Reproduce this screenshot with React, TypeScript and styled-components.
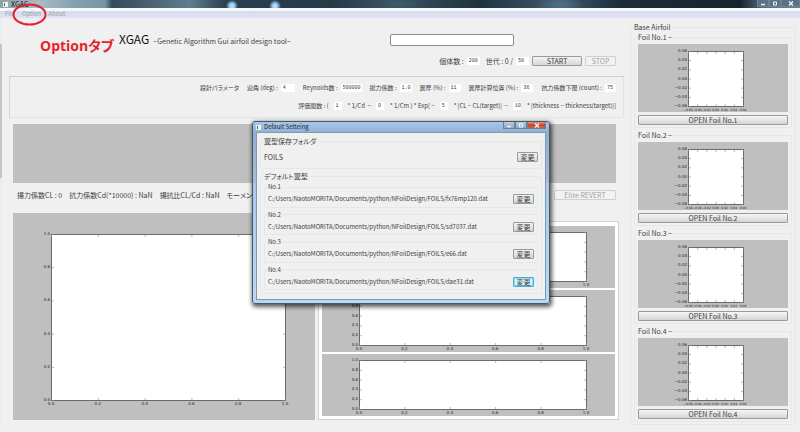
import React from "react";
import styled, { createGlobalStyle, css } from "styled-components";

const GlobalStyle = createGlobalStyle`
  * { box-sizing: border-box; }
  body {
    margin: 0;
    background: #f0f0f0;
    color: #3c3c3c;
    font-family: "Noto Sans CJK JP", "Noto Sans", sans-serif;
    font-size: 7px;
    line-height: 10px;
    font-feature-settings: "palt";
  }
  button, input { font: inherit; color: inherit; margin: 0; }
`;

/* ---------- window chrome ---------- */

const Page = styled.div`
  position: relative;
  min-height: 100vh;
  overflow: hidden;
`;

const TitleBar = styled.header`
  display: flex;
  align-items: center;
  height: 8px;
  padding-left: 3px;
  gap: 3px;
  color: #10181c;
  background:
    radial-gradient(circle at 232px 6px, #a5dcff 0 2px, transparent 6px),
    radial-gradient(circle at 275px 6px, #a5dcff 0 2px, transparent 6px),
    radial-gradient(ellipse 24px 9px at 560px 5px, #4f7088, transparent),
    radial-gradient(ellipse 26px 8px at 400px 4px, #3c5a68, transparent),
    linear-gradient(90deg, #8fa1a8 0, #a8bcc2 40px, #82a0b0 75px, #7697a8 105px, #36495a 112px, #5f7d90 190px,
      #2b4150 225px, #263a48 330px, #3a5260 390px, #20323f 480px, #405a70 560px, #1c2d38 620px, #18242c 740px, #597084 765px, #6c8194 100%);
`;

const AppIcon = styled.span`
  width: 5px;
  height: 5px;
  border: 1px solid #e9f3ef;
  background: linear-gradient(90deg, #1c7a55 50%, #f4f4f4 50%);
`;

const WindowButtons = styled.div`
  display: flex;
  align-self: flex-start;
  margin-left: auto;
`;

const WindowButton = styled.button<{ $tone?: "close" | "dark"; $wide?: boolean }>`
  display: grid;
  place-items: center;
  width: ${(p) => (p.$wide ? 19 : 12)}px;
  height: 7px;
  padding: 0;
  border: 1px solid #6d8298;
  border-top: 0;
  color: #f4f8fb;
  background: ${(p) =>
    p.$tone === "close"
      ? "linear-gradient(#e09a8c, #c8432c 50%, #d0664c)"
      : p.$tone === "dark"
        ? "#5b7187"
        : "linear-gradient(#b9cde2, #8ea9c6)"};
`;

const MenuBar = styled.nav`
  display: flex;
  align-items: flex-start;
  height: 11px;
  padding: 0 0 0 5px;
  gap: 7px;
  border-top: 3px solid #f6f8fc;
  background: linear-gradient(#d6dbed, #dfe3f2);
  border-bottom: 1px solid #ececf0;
`;

const MenuItem = styled.button`
  padding: 0;
  border: 0;
  font-size: 6px;
  line-height: 6px;
  color: #9b9da8;
  background: none;
`;

const Body = styled.div`
  display: flex;
  align-items: stretch;
  padding-right: 4px;
`;

const Backdrop = styled.div`
  flex: 0 0 2px;
  margin-right: 7px;
  background: linear-gradient(#e9ecf2 25px, #c4c5ca 25px, #c4c5ca 159px, #ececec 159px);
`;

/* ---------- main column ---------- */

const Main = styled.main`
  flex: 1;
  min-width: 0;
  margin-right: 6px;
`;

const Brand = styled.div`
  display: grid;
  grid-template-columns: 271px 124px;
  align-items: center;
  height: 18px;
  margin-top: 12px;
  padding-left: 110px;
`;

const BrandTitle = styled.h1`
  display: flex;
  align-items: baseline;
  gap: 4px;
  margin: 0;
  font-size: 12px;
  line-height: 16px;
  font-weight: 400;
  color: #111;
`;

const Tagline = styled.small`
  font-size: 7px;
  color: #444;
`;

const NameInput = styled.input`
  height: 12px;
  padding: 0 3px;
  border: 1px solid #8b8b8b;
  border-radius: 2px;
  background: #fff;
`;

const Row = styled.div<{ $height: number; $gap?: number }>`
  display: flex;
  align-items: center;
  justify-content: flex-end;
  gap: ${(p) => p.$gap ?? 8}px;
  height: ${(p) => p.$height}px;
  padding-right: 8px;
  white-space: nowrap;
`;

const Field = styled.label`
  display: flex;
  align-items: center;
  gap: 3px;
  white-space: pre;
`;

const NumberBox = styled.input<{ $w: number }>`
  width: ${(p) => p.$w}px;
  height: 8px;
  padding: 0 0 0 2px;
  border: 0;
  background: #fff;
  font-family: "Liberation Mono", monospace;
  font-size: 5px;
  line-height: 8px;
`;

const buttonFace = css`
  border: 1px solid #9a9a9a;
  border-radius: 1px;
  background: linear-gradient(#f4f4f4, #e6e6e6 50%, #d4d4d4);
`;

const Button = styled.button<{ $w?: number; $focus?: boolean }>`
  ${buttonFace}
  width: ${(p) => (p.$w ? `${p.$w}px` : "100%")};
  height: 10px;
  padding: 0;
  font-size: 7px;
  line-height: 8px;
  text-align: center;
  white-space: nowrap;
  ${(p) =>
    p.$focus &&
    css`
      border-color: #3fb0dc;
      background: linear-gradient(#eef8fc, #cfe6ef);
      box-shadow: inset 0 0 0 1px #8fdcf4;
    `}
  &:disabled {
    border-color: #cfcfcf;
    background: #f2f2f2;
    color: #a2a2a2;
  }
`;

const Parameters = styled.section`
  margin-top: 3px;
  padding: 2px 0;
  border: 1px solid #e2e4e4;
  border-top-color: #cfcfcf;
  border-left-color: #d4d4d4;
  font-size: 6px;
  & > ${Row} { padding-right: 7px; }
`;

const Formula = styled(Row)`
  & > ${Field} { gap: 5px; }
`;

const Preview = styled.div`
  height: 59px;
  margin: 6px 8px 0 4px;
  background: #bfbfbf;
`;

const Stats = styled(Row)`
  justify-content: flex-start;
  padding-left: 8px;
  & > :last-child { margin-left: auto; }
`;

const Charts = styled.section`
  display: grid;
  grid-template-columns: 302fr 301fr;
  gap: 3px;
  align-items: end;
  margin: 6px 5px 0 4px;
`;

const Stack = styled.div`
  display: flex;
  flex-direction: column;
  gap: 2px;
  padding: 4px 3px 3px;
  border: 1px solid #d2d2d2;
  background: #fff;
`;

const Canvas = styled.svg`
  display: block;
  width: 100%;
  height: auto;
  background: #bfbfbf;
  font-family: "DejaVu Sans", sans-serif;
  font-size: 4px;
  fill: #222;
`;

/* ---------- group boxes ---------- */

const Group = styled.fieldset`
  min-width: 0;
  margin: 0;
  padding: 0 3px;
  border: 1px solid #e2e9ea;
  border-radius: 2px;
`;

const Legend = styled.legend`
  padding: 0;
  line-height: 10px;
`;

const Aside = styled.aside`
  flex: 0 0 166px;
  padding-top: 3px;
`;

const Foil = styled(Group)`
  padding: 2px 3px;
  margin-bottom: 2px;
  & > ${Canvas} { margin-bottom: 3px; }
  & > ${Button} { display: block; }
`;

/* ---------- dialog ---------- */

const Dialog = styled.section`
  position: absolute;
  left: 252px;
  top: 121px;
  width: 298px;
  padding: 0 3px 3px;
  border: 1px solid #46586a;
  border-radius: 3px;
  background: linear-gradient(#a9c8e8 0, #8fb0d2 11px, #a7bdd2 60px, #a9c9ea 61px, #b9d8f6 100%);
  box-shadow: 1px 2px 4px 1px rgba(0, 0, 0, 0.65);
`;

const DialogBar = styled.div`
  display: flex;
  align-items: center;
  gap: 3px;
  height: 10px;
  font-size: 6px;
  color: #1c2a38;
`;

const DialogBody = styled.div`
  padding: 3px 3px 5px;
  border: 1px solid #8098b0;
  background: #f0f0f0;
`;

const Folder = styled(Group)`
  height: 33px;
  margin-bottom: 2px;
`;

const Defaults = styled(Group)`
  padding-top: 1px;
  padding-bottom: 1px;
`;

const DefaultList = styled.div`
  display: grid;
  grid-auto-rows: 1fr;
  height: 110px;
  font-size: 6px;
`;

const DefaultItem = styled(Group)`
  margin-bottom: 2px;
`;

const PathRow = styled.div<{ $tall?: boolean }>`
  display: flex;
  align-items: center;
  justify-content: space-between;
  height: ${(p) => (p.$tall ? 22 : 14)}px;
  white-space: nowrap;
`;

/* ---------- annotation ---------- */

const Ring = styled.svg`
  position: absolute;
  left: 11px;
  top: 2px;
  width: 37px;
  height: 25px;
`;

const Note = styled.strong`
  position: absolute;
  left: 40px;
  top: 37px;
  font-family: "Open Sans", "Noto Sans CJK JP", sans-serif;
  font-size: 14px;
  line-height: 18px;
  color: #e8222c;
`;

/* ---------- plots ---------- */

type PlotProps = {
  w: number;
  h: number;
  box: [number, number, number, number];
  xs: string[];
  ys: string[];
  label: string;
  xSize?: number;
};

function Plot({ w, h, box, xs, ys, label, xSize = 4 }: PlotProps) {
  const [x0, y0, x1, y1] = box;
  const px = (i: number) => x0 + ((x1 - x0) * i) / (xs.length - 1);
  const py = (i: number) => y1 - ((y1 - y0) * i) / (ys.length - 1);
  return (
    <Canvas viewBox={`0 0 ${w} ${h}`} role="img" aria-label={label}>
      <rect x={x0 + 0.5} y={y0 + 0.5} width={x1 - x0} height={y1 - y0} fill="#fff" stroke="#6a6a6a" />
      {xs.map((t, i) => (
        <g key={`x${i}`}>
          <path d={`M${px(i) + 0.5} ${y1}v-2M${px(i) + 0.5} ${y0 + 1}v2`} stroke="#888" strokeWidth=".6" />
          <text x={px(i)} y={y1 + 5} textAnchor="middle" fontSize={xSize}>{t}</text>
        </g>
      ))}
      {ys.map((t, i) => (
        <g key={`y${i}`}>
          <path d={`M${x0 + 1} ${py(i) + 0.5}h2M${x1} ${py(i) + 0.5}h-2`} stroke="#888" strokeWidth=".6" />
          <text x={x0 - 1} y={py(i) + 1} textAnchor="end">{t}</text>
        </g>
      ))}
    </Canvas>
  );
}

const unit = ["0.0", "0.2", "0.4", "0.6", "0.8", "1.0"];
const foilTicks = ["−0.06", "−0.04", "−0.02", "0.00", "0.02", "0.04", "0.06"];

const defaults = ["fx76mp120.dat", "sd7037.dat", "e66.dat", "dae31.dat"];
const folder = "C:/Users/NaotoMORITA/Documents/python/NFoilDesign/FOILS/";

type NumProps = { text: string; value: string; w: number };
const Num = ({ text, value, w }: NumProps) => (
  <Field>
    {text}
    <NumberBox $w={w} defaultValue={value} />
  </Field>
);

const Controls = ({ dark }: { dark?: boolean }) => (
  <WindowButtons>
    <WindowButton $tone={dark ? "dark" : undefined} aria-label="Minimize">
      <svg width="6" height="5"><path d="M1 3.5h4" stroke="currentColor" strokeWidth="1.4" /></svg>
    </WindowButton>
    <WindowButton $tone={dark ? "dark" : undefined} aria-label="Maximize">
      <svg width="6" height="5"><path d="M1.5 1h3v3h-3z" fill="none" stroke="currentColor" /></svg>
    </WindowButton>
    <WindowButton $tone={dark ? "dark" : "close"} $wide aria-label="Close">
      <svg width="6" height="5"><path d="M1 .5l4 4M5 .5l-4 4" stroke="currentColor" strokeWidth="1.3" /></svg>
    </WindowButton>
  </WindowButtons>
);

export default function App() {
  return (
    <Page>
      <GlobalStyle />
      <TitleBar>
        <AppIcon />
        XGAG
        <Controls dark />
      </TitleBar>
      <MenuBar>
        <MenuItem>File</MenuItem>
        <MenuItem>Option</MenuItem>
        <MenuItem>About</MenuItem>
      </MenuBar>

      <Body>
        <Backdrop />
        <Main>
          <Brand>
            <BrandTitle>
              XGAG <Tagline>−Genetic Algorithm Gui airfoil design tool−</Tagline>
            </BrandTitle>
            <NameInput aria-label="Project name" />
          </Brand>
          <Row $height={24} $gap={3}>
            <Num text="個体数 :" value="200" w={13} />
            <span />
            <Num text="世代 : 0 /" value="50" w={13} />
            <Button $w={50}>START</Button>
            <Button $w={31} disabled>STOP</Button>
          </Row>

          <Parameters>
            <Row $height={18}>
              <span>設計パラメータ</span>
              <Num text="迎角 (deg) :" value="4" w={14} />
              <Num text="Reynolds数 :" value="500000" w={21} />
              <Num text="揚力係数 :" value="1.0" w={12} />
              <Num text="翼厚 (%) :" value="11" w={12} />
              <Num text="翼厚計算位置 (%) :" value="36" w={12} />
              <Num text="抗力係数下限 (count) :" value="75" w={11} />
            </Row>
            <Formula $height={18} $gap={6}>
              <Num text="評価関数 : (" value="1" w={8} />
              <Num text="* 1/Cd  −" value="0" w={8} />
              <Num text="* 1/Cm ) * Exp[ −" value="5" w={8} />
              <Num text="* |CL − CL(target)|  −" value="10" w={8} />
              <span>* |thickness − thickness(target)|]</span>
            </Formula>
          </Parameters>

          <Preview />

          <Stats $height={24} $gap={7}>
            <span>揚力係数CL : 0</span>
            <span>抗力係数Cd(*10000) : NaN</span>
            <span>揚抗比CL/Cd : NaN</span>
            <span>モーメント係数</span>
            <Button $w={62} disabled>Elite REVERT</Button>
          </Stats>

          <Charts>
            <Plot w={302} h={207} box={[38, 21, 272, 187]} xs={unit} ys={unit} label="Airfoil" />
            <Stack>
              {["CL", "Cd", "Cm"].map((n) => (
                <Plot key={n} w={293} h={62} box={[37, 6, 264, 55]} xs={unit} ys={unit} label={n} />
              ))}
            </Stack>
          </Charts>
        </Main>

        <Aside>
          <Group>
            <Legend>Base Airfoil</Legend>
            {[1, 2, 3, 4].map((n) => (
              <Foil key={n}>
                <Legend>Foil No.{n} −</Legend>
                <Plot w={150} h={68} box={[50, 7, 105, 62]} xs={foilTicks} ys={foilTicks} xSize={3} label={`Foil ${n}`} />
                <Button>OPEN Foil No.{n}</Button>
              </Foil>
            ))}
          </Group>
        </Aside>
      </Body>

      <Dialog role="dialog" aria-label="Default Setteing">
        <DialogBar>
          <AppIcon />
          Default Setteing
          <Controls />
        </DialogBar>
        <DialogBody>
          <Folder>
            <Legend>翼型保存フォルダ</Legend>
            <PathRow $tall>
              FOILS
              <Button $w={21}>変更</Button>
            </PathRow>
          </Folder>
          <Defaults>
            <Legend>デフォルト翼型</Legend>
            <DefaultList>
              {defaults.map((file, i) => (
                <DefaultItem key={file}>
                  <Legend>No.{i + 1}</Legend>
                  <PathRow>
                    {folder + file}
                    <Button $w={21} $focus={i === 3}>変更</Button>
                  </PathRow>
                </DefaultItem>
              ))}
            </DefaultList>
          </Defaults>
        </DialogBody>
      </Dialog>

      <Ring viewBox="0 0 37 25" aria-hidden="true">
        <ellipse cx="18.5" cy="12.5" rx="16" ry="10" fill="none" stroke="#e3202c" strokeWidth="2" />
      </Ring>
      <Note>Optionタブ</Note>
    </Page>
  );
}
